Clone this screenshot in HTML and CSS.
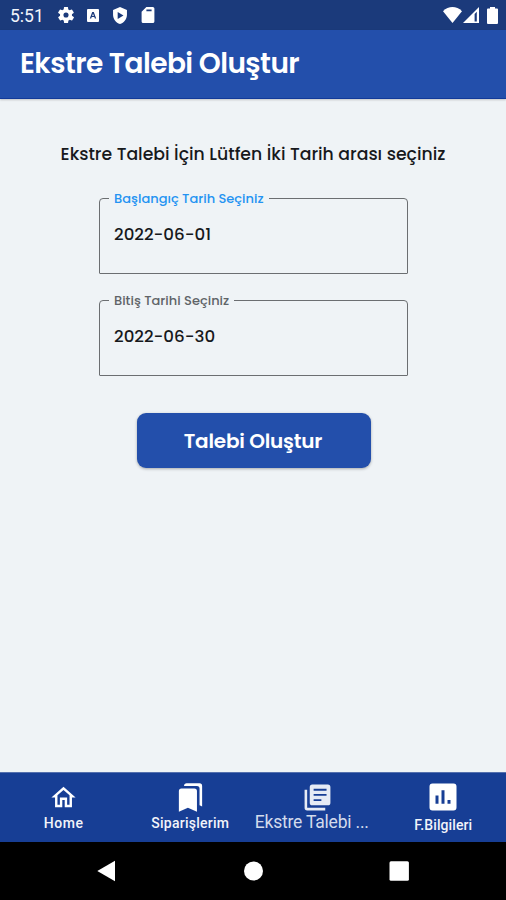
FILE: index.html
```html
<!DOCTYPE html>
<html lang="tr">
<head>
<meta charset="utf-8">
<title>Ekstre Talebi Oluştur</title>
<link rel="stylesheet" href="styles.css">
</head>
<body>
<div class="screen">
  <div class="status">
    <span class="clock">5:51</span>
    <svg class="s-gear" viewBox="2 2 20 20"><path fill-rule="evenodd" d="M19.4 13a7.5 7.5 0 0 0 0-2l2.1-1.6a.5.5 0 0 0 .1-.7l-2-3.4a.5.5 0 0 0-.6-.2l-2.500 1a7.500 7.500 0 0 0-1.700-1L14.500 2.400A.5.5 0 0 0 14 2h-4a.5.5 0 0 0-.5.4l-.4 2.700a7.500 7.500 0 0 0-1.700 1l-2.500-1a.5.5 0 0 0-.6.2l-2 3.400a.5.5 0 0 0 .1.700L4.600 11a7.500 7.500 0 0 0 0 2l-2.100 1.600a.5.5 0 0 0-.1.700l2 3.400c.1.200.4.300.6.200l2.500-1a7.500 7.500 0 0 0 1.700 1l.4 2.700c0 .200.200.400.5.400h4c.2 0 .5-.2.5-.4l.4-2.700a7.500 7.500 0 0 0 1.700-1l2.500 1c.2.100.5 0 .6-.2l2-3.400a.5.5 0 0 0-.1-.7zM12 15.200a3.200 3.200 0 1 1 0-6.400 3.200 3.200 0 0 1 0 6.400z"/></svg>
    <svg class="s-a" viewBox="0 0 12 13"><path fill-rule="evenodd" d="M1 0h10a1 1 0 0 1 1 1v11a1 1 0 0 1-1 1H1a1 1 0 0 1-1-1V1a1 1 0 0 1 1-1zM5.200 3 2.800 9.500h1.400l.5-1.400h2.600l.5 1.400h1.400L6.800 3zM6 4.600l.8 2.300H5.200z"/></svg>
    <svg class="s-shield" viewBox="3 1 18 22"><path fill-rule="evenodd" d="M12 1 3 5v6c0 5.500 3.800 10.700 9 12 5.200-1.300 9-6.500 9-12V5zM9 7.500l7.500 4.500L9 16.500z"/></svg>
    <svg class="s-sd" viewBox="4 2 16 20"><path fill-rule="evenodd" d="M18 2h-8L4 8v12a2 2 0 0 0 2 2h12a2 2 0 0 0 2-2V4a2 2 0 0 0-2-2zM10 5h6.500v2.200H10z"/></svg>
    <span class="grow"></span>
    <svg class="s-wifi" viewBox="0 0 19 16"><path d="M0 4.200C5.500-1.400 13.500-1.400 19 4.200L9.500 16z"/></svg>
    <svg class="s-cell" viewBox="0 0 16 16"><path fill-rule="evenodd" d="M16 0v16H0zM11.600 7v7.500h2.200V4.800z"/></svg>
    <svg class="s-batt" viewBox="0 0 11 17"><path d="M3 0h5v1.500h2a1 1 0 0 1 1 1V16a1 1 0 0 1-1 1H1a1 1 0 0 1-1-1V2.500a1 1 0 0 1 1-1h2z"/></svg>
  </div>
  <header class="appbar"><h1>Ekstre Talebi Oluştur</h1></header>
  <main class="content">
    <p class="prompt">Ekstre Talebi İçin Lütfen İki Tarih arası seçiniz</p>
    <fieldset class="field active">
      <legend>Başlangıç Tarih Seçiniz</legend>
      <div class="value">2022-06-01</div>
    </fieldset>
    <fieldset class="field">
      <legend>Bitiş Tarihi Seçiniz</legend>
      <div class="value">2022-06-30</div>
    </fieldset>
    <button class="submit">Talebi Oluştur</button>
  </main>
  <nav class="tabs">
    <div class="tab home">
      <div class="icon"><svg viewBox="0 0 24 24"><path d="m12 5.690 5 4.500V18h-2v-6H9v6H7v-7.810zM12 3 2 12h3v8h6v-6h2v6h6v-8h3z"/></svg></div>
      <span>Home</span>
    </div>
    <div class="tab orders">
      <div class="icon"><svg viewBox="0 0 24 24"><path d="m19 18 2 1V3a2 2 0 0 0-2-2H8.990C7.890 1 7 1.900 7 3h10a2 2 0 0 1 2 2zM15 5H5a2 2 0 0 0-2 2v16l7-3 7 3V7a2 2 0 0 0-2-2z"/></svg></div>
      <span>Siparişlerim</span>
    </div>
    <div class="tab current">
      <div class="icon"><svg viewBox="0 0 24 24"><path fill-rule="evenodd" d="M4 6H2v14a2 2 0 0 0 2 2h14v-2H4zM20 2H8a2 2 0 0 0-2 2v12a2 2 0 0 0 2 2h12a2 2 0 0 0 2-2V4a2 2 0 0 0-2-2zM19 10.700H9V9.300h10zM15 14.700H9v-1.400h6zM19 6.700H9V5.300h10z"/></svg></div>
      <span>Ekstre Talebi ...</span>
    </div>
    <div class="tab info">
      <div class="icon"><svg viewBox="0 0 24 24"><path fill-rule="evenodd" d="M19 3H5a2 2 0 0 0-2 2v14a2 2 0 0 0 2 2h14a2 2 0 0 0 2-2V5a2 2 0 0 0-2-2zM9 16.500H7v-5.500h2zM13 16.500h-2V7.500h2zM17 16.500h-2v-2.500h2z"/></svg></div>
      <span>F.Bilgileri</span>
    </div>
  </nav>
  <div class="system">
    <svg viewBox="0 0 20 22"><path d="M18 .8v20.400L.3 11z"/></svg>
    <svg viewBox="0 0 20 22"><circle cx="10.500" cy="11" r="9.500"/></svg>
    <svg viewBox="0 0 20 22"><rect x=".5" y="1.300" width="19.400" height="19.400" rx="1.500"/></svg>
  </div>
</div>
</body>
</html>
```
FILE: styles.css
```css
* { box-sizing: border-box; }
body { margin: 0; background: #eff3f6; font-family: Poppins, Inter, sans-serif; }
svg { display: block; fill: #fff; flex: none; }
.screen { width: 506px; height: 900px; display: flex; flex-direction: column; overflow: hidden; }

.status { height: 30px; background: #1b3a7b; display: flex; align-items: center; padding: 0 8px 0 10px; }
.clock { width: 48px; padding-top: 2px; font: 400 17.500px/20px Roboto, sans-serif; color: #f2f5fb; }
.grow { flex: 1; }
.s-gear { width: 16px; height: 16px; }
.s-a { width: 12px; height: 13px; margin-left: 13px; }
.s-shield { width: 16px; height: 17px; margin-left: 13px; }
.s-sd { width: 14px; height: 16px; margin-left: 13px; }
.s-wifi { width: 19px; height: 16px; }
.s-cell { width: 16px; height: 16px; margin-left: 1px; }
.s-batt { width: 11px; height: 17px; margin-left: 8px; }

.appbar { height: 69px; padding: 0 20px; background: #234fab; border-bottom: 1px solid #123a99; box-shadow: 0 1px 2px rgba(0,0,0,.2); display: flex; align-items: center; }
h1 { margin: 0; font-size: 28px; line-height: 40px; font-weight: 600; letter-spacing: -.54px; color: #fff; white-space: nowrap; }

.content { flex: 1; display: flex; flex-direction: column; align-items: center; padding-top: 43px; }
.prompt { margin: 0 0 22px; font-size: 17.300px; line-height: 25px; font-weight: 500; color: #17191c; white-space: nowrap; }
.field { width: 309px; height: 85px; min-width: 0; margin: 0 0 17px 1px; padding: 0 9px; border: 1px solid #6b6e71; border-radius: 4px 4px 1px 1px; }
legend { padding: 0 5px; font-size: 13px; line-height: 19px; font-weight: 500; color: #606468; white-space: nowrap; }
.active legend { color: #2493f2; }
.value { padding: 15px 5px 0; font-size: 16.700px; line-height: 22px; font-weight: 500; color: #17191c; }
.submit { width: 234px; height: 55px; margin: 20px 0 0 1px; padding: 0 1px 0 0; border: 0; border-radius: 9px; background: #234fab; color: #fff; font: 600 20px/30px Poppins, Inter, sans-serif; letter-spacing: -.2px; box-shadow: 0 1px 3px rgba(0,0,0,.3); }

.tabs { height: 70px; background: #173e95; border-top: 1px solid #5470ae; display: grid; grid-template-columns: repeat(4, 1fr); color: #f2f4fa; font: 500 14px/18px Roboto, sans-serif; }
.tab { display: flex; flex-direction: column; align-items: center; padding: 9px 0 0 1px; white-space: nowrap; }
.icon { width: 36px; height: 30px; display: flex; align-items: center; justify-content: center; }
.icon svg { width: 29px; height: 29px; }
.tab span { margin-top: 2px; }
.home span { letter-spacing: .6px; }
.orders .icon svg { width: 31px; height: 31px; }
.orders span { letter-spacing: .25px; }
.current { color: #d3dbec; }
.current .icon svg { width: 31px; height: 31px; fill: #e6ebf5; }
.current .icon { margin-left: 1px; }
.current span { margin: 1px 10px 0 0; font-size: 17.500px; font-weight: 400; letter-spacing: -.2px; }
.info .icon svg { width: 36px; height: 36px; }
.info span { margin-top: 4px; letter-spacing: .1px; }

.system { height: 58px; background: #000; display: flex; justify-content: center; align-items: center; gap: 126px; }
.system svg { width: 20px; height: 22px; }
```
